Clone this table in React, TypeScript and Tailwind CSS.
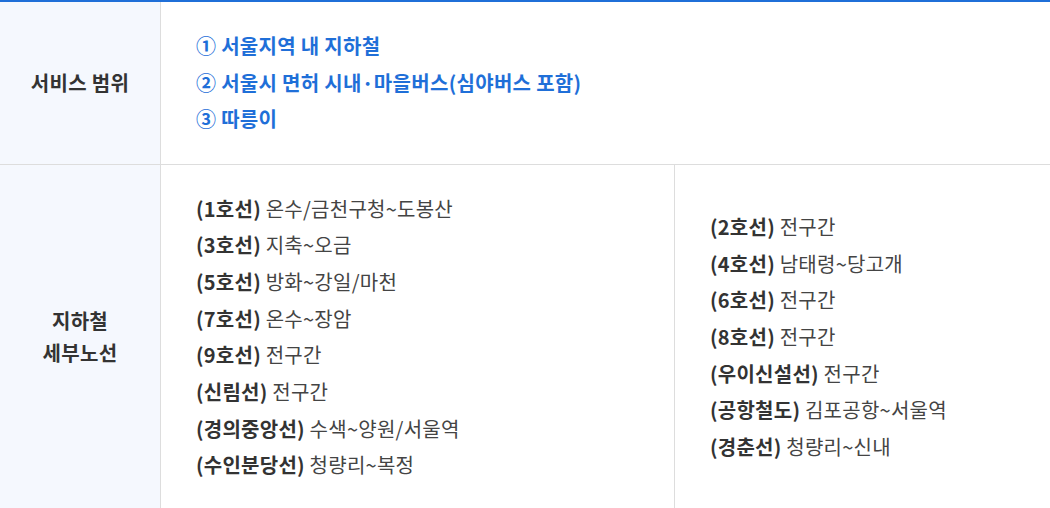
import React from "react";

const leftLines: [string, string][] = [
  ["(1호선)", "온수/금천구청~도봉산"],
  ["(3호선)", "지축~오금"],
  ["(5호선)", "방화~강일/마천"],
  ["(7호선)", "온수~장암"],
  ["(9호선)", "전구간"],
  ["(신림선)", "전구간"],
  ["(경의중앙선)", "수색~양원/서울역"],
  ["(수인분당선)", "청량리~복정"],
];

const rightLines: [string, string][] = [
  ["(2호선)", "전구간"],
  ["(4호선)", "남태령~당고개"],
  ["(6호선)", "전구간"],
  ["(8호선)", "전구간"],
  ["(우이신설선)", "전구간"],
  ["(공항철도)", "김포공항~서울역"],
  ["(경춘선)", "청량리~신내"],
];

function LineList({ items }: { items: [string, string][] }) {
  return (
    <ul className="text-[20px] leading-[36.7px] tracking-[0.25px] text-[#444]">
      {items.map(([name, range]) => (
        <li key={name}>
          <b className="font-bold text-[#333]">{name}</b> {range}
        </li>
      ))}
    </ul>
  );
}

export default function App() {
  return (
    <div
      className="w-[1050px] bg-white border-t-2 border-[#1f6fd8]"
      style={{ fontFamily: '"Noto Sans CJK KR", "Noto Sans", sans-serif' }}
    >
      {/* 서비스 범위 */}
      <div className="flex border-b border-[#dddddd]">
        <div className="w-[161px] shrink-0 bg-[#f5f8fe] border-r border-[#dddddd] flex items-center justify-center text-[20px] tracking-[0.3px] font-bold text-[#333]">
          서비스 범위
        </div>
        <ul className="flex-1 pl-[35px] py-[26px] text-[20px] leading-[36.5px] tracking-[0.3px] font-bold text-[#1f6fd8]">
          <li>① 서울지역 내 지하철</li>
          <li>② 서울시 면허 시내·마을버스(심야버스 포함)</li>
          <li>③ 따릉이</li>
        </ul>
      </div>

      {/* 지하철 세부노선 */}
      <div className="flex">
        <div className="w-[161px] shrink-0 bg-[#f5f8fe] border-r border-[#dddddd] flex items-center justify-center text-center text-[20px] leading-[32px] tracking-[0.3px] font-bold text-[#333]">
          지하철
          <br />
          세부노선
        </div>
        <div className="w-[514px] shrink-0 border-r border-[#dddddd] pl-[35px] py-[26px]">
          <LineList items={leftLines} />
        </div>
        <div className="flex-1 flex items-center pl-[35px] py-[26px]">
          <LineList items={rightLines} />
        </div>
      </div>
    </div>
  );
}
